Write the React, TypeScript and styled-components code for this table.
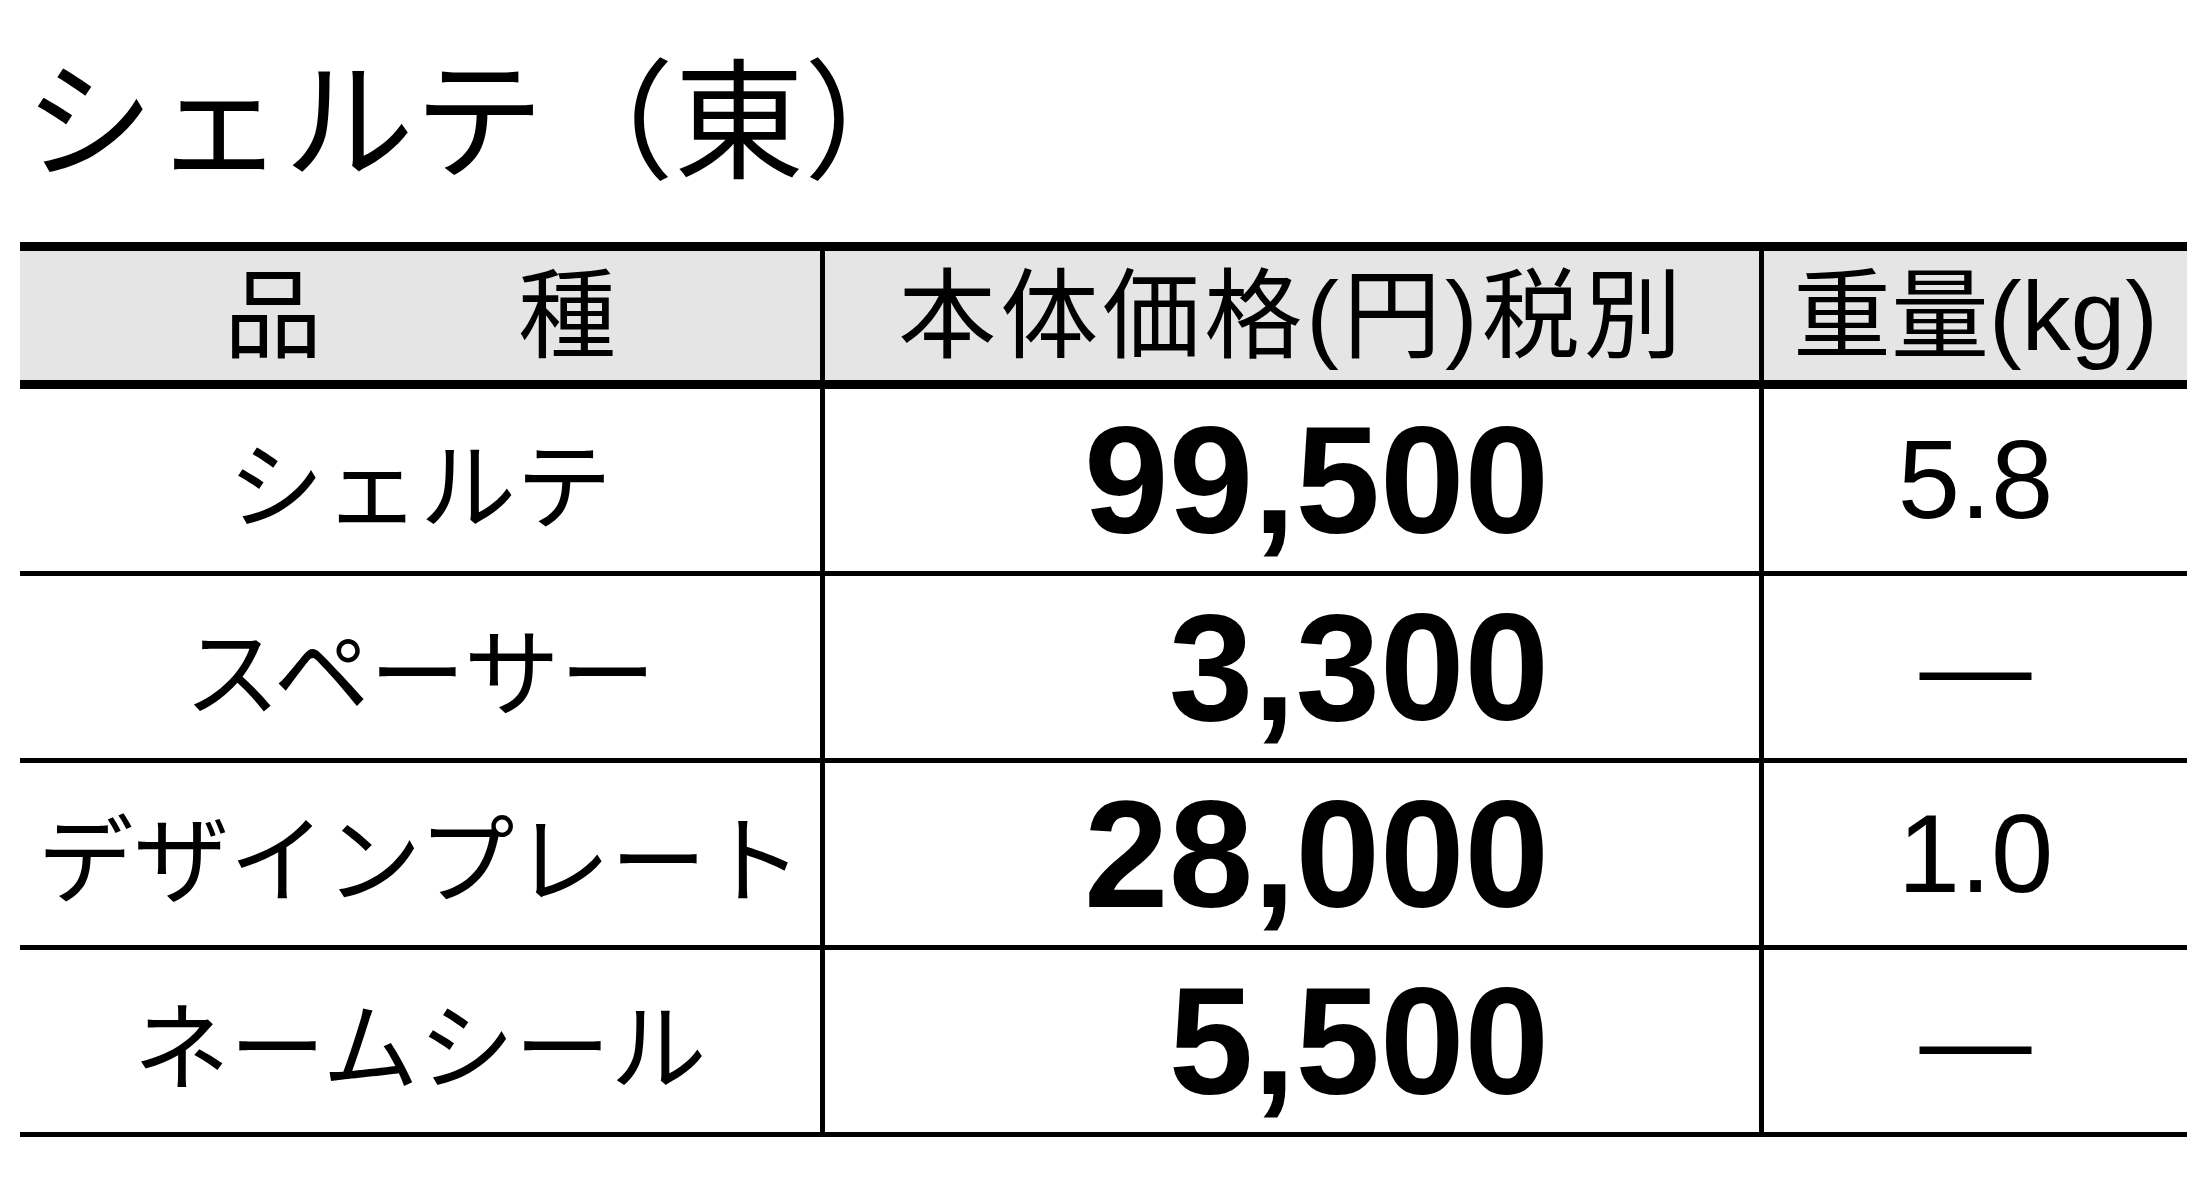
import React from 'react';
import styled, { createGlobalStyle } from 'styled-components';

const GlobalStyle = createGlobalStyle`
  html, body {
    margin: 0;
    padding: 0;
    background: #ffffff;
    color: #000000;
  }
`;

const Page = styled.main`
  width: 2210px;
  padding: 46px 0 40px 20px;
  box-sizing: border-box;
`;

const Title = styled.h1`
  margin: 0 0 66px 4px;
  font-family: "Noto Sans CJK JP", "Liberation Sans", sans-serif;
  font-size: 130px;
  font-weight: 400;
  line-height: 1;
  letter-spacing: 0;
`;

const Table = styled.div`
  width: 2167px;
  border-top: 9px solid #000;
`;

const Row = styled.div<{ $height: number; $line: number; $head?: boolean }>`
  display: grid;
  grid-template-columns: 800px 939px 428px;
  height: ${({ $height }) => $height}px;
  border-bottom: ${({ $line }) => $line}px solid #000;
  background: ${({ $head }) => ($head ? '#e5e5e5' : '#ffffff')};
`;

const Cell = styled.div<{ $first?: boolean; $align?: 'center' | 'end' }>`
  display: flex;
  align-items: center;
  justify-content: ${({ $align }) => ($align === 'end' ? 'flex-end' : 'center')};
  border-left: ${({ $first }) => ($first ? 'none' : '5px solid #000')};
  padding-right: ${({ $align }) => ($align === 'end' ? '210px' : '0')};
  overflow: hidden;
  white-space: nowrap;
`;

const HeadText = styled.span<{ $spacing?: number }>`
  font-family: "Liberation Sans", "Noto Sans CJK JP", sans-serif;
  font-size: 98px;
  line-height: 1;
  letter-spacing: ${({ $spacing }) => $spacing ?? 0}px;
`;

const NameText = styled.span`
  font-family: "Noto Sans CJK JP", sans-serif;
  font-size: 96px;
  line-height: 1;
`;

const PriceText = styled.span`
  font-family: "Liberation Sans", Arial, sans-serif;
  font-weight: 700;
  font-size: 152px;
  line-height: 1;
`;

const WeightText = styled.span`
  font-family: "Liberation Sans", Arial, sans-serif;
  font-size: 112px;
  line-height: 1;
`;

const items = [
  { name: 'シェルテ', price: '99,500', weight: '5.8' },
  { name: 'スペーサー', price: '3,300', weight: '—' },
  { name: 'デザインプレート', price: '28,000', weight: '1.0' },
  { name: 'ネームシール', price: '5,500', weight: '—' },
];

export default function App() {
  return (
    <>
      <GlobalStyle />
      <Page>
        <Title>シェルテ（東）</Title>
        <Table>
          <Row $height={129} $line={9} $head>
            <Cell $first>
              <HeadText>品　　種</HeadText>
            </Cell>
            <Cell>
              <HeadText $spacing={4}>本体価格(円)税別</HeadText>
            </Cell>
            <Cell>
              <HeadText>重量(kg)</HeadText>
            </Cell>
          </Row>
          {items.map((item) => (
            <Row key={item.name} $height={182} $line={5}>
              <Cell $first>
                <NameText>{item.name}</NameText>
              </Cell>
              <Cell $align="end">
                <PriceText>{item.price}</PriceText>
              </Cell>
              <Cell>
                <WeightText>{item.weight}</WeightText>
              </Cell>
            </Row>
          ))}
        </Table>
      </Page>
    </>
  );
}
